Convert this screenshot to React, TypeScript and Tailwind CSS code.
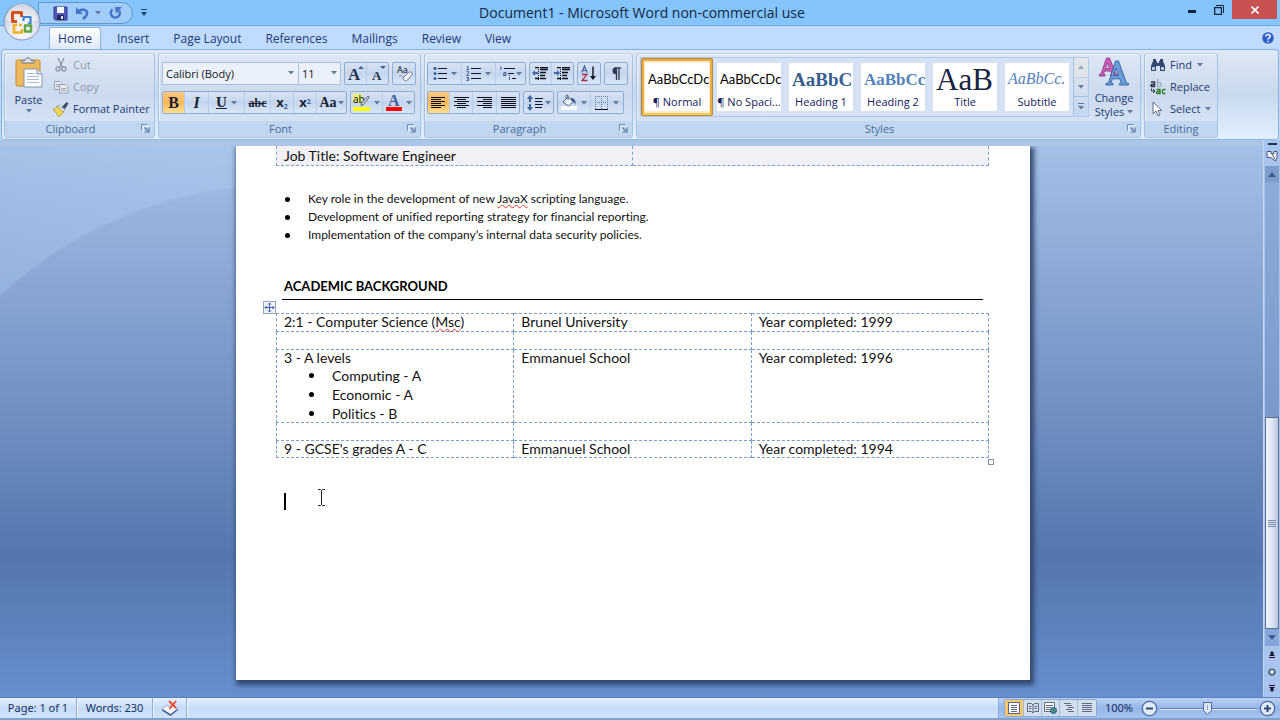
import React from "react";

type Kids = { children?: React.ReactNode };

const Caret = ({ className = "" }: { className?: string }) => (
  <svg className={`shrink-0 ${className}`} width="6" height="4" viewBox="0 0 6 4" aria-hidden="true">
    <path d="M0 0h6L3 3.5z" fill="#66799c" />
  </svg>
);

const Launcher = ({ label }: { label: string }) => (
  <button aria-label={`${label} options`} className="absolute right-1 top-[3px]">
    <svg width="9" height="9" viewBox="0 0 9 9" fill="none">
      <path d="M2 8V2h6" stroke="#fff" strokeOpacity=".8" />
      <path d="M.5 6.500V.500h6" stroke="#6f8bb5" />
      <path d="M3.500 3.500l3.500 3.500M8 3.500V8H3.500" stroke="#5b77a3" strokeWidth="1.200" />
    </svg>
  </button>
);

function Group({ label, width, launcher = true, children }: Kids & { label: string; width: string; launcher?: boolean }) {
  return (
    <section
      aria-label={label}
      className={`${width} flex shrink-0 flex-col overflow-hidden rounded-[3px] border border-[#a9c2e3] border-t-[#c3d3ea] bg-linear-to-b from-[#dde7f5] via-[#cbdaee] to-[#d9e7f9] shadow-[inset_1px_1px_0_#e9f1fb]`}
    >
      <div className="flex min-h-0 flex-1">{children}</div>
      <div className={`relative flex h-4 items-center justify-center bg-[#c1d7f0] text-[11px] leading-4 text-[#4a6a9c] ${launcher ? "pr-[18px]" : ""}`}>
        {label}
        {launcher && <Launcher label={label} />}
      </div>
    </section>
  );
}

const Box = ({ children }: Kids) => (
  <div className="flex h-[23px] divide-x divide-[#b9cbe6] overflow-hidden rounded-[2px] border border-[#94abd0] bg-linear-to-b from-[#d7e3f4] via-[#c5d6ed] to-[#d8e6f8]">
    {children}
  </div>
);

function Tool({ label, width, active = false, children }: Kids & { label: string; width: string; active?: boolean }) {
  return (
    <button
      aria-label={label}
      aria-pressed={active}
      className={`${width} flex items-center justify-center gap-1 leading-none text-[#1b2233] ${active ? "bg-linear-to-b from-[#f9c882] via-[#fbb95a] to-[#fde08e]" : ""}`}
    >
      {children}
    </button>
  );
}

const serif = "font-['Liberation_Serif',serif]";

const Lines = ({ widths, align }: { widths: number[]; align: "l" | "c" | "r" }) => (
  <svg width="15" height="12" viewBox="0 0 15 12" aria-hidden="true" shapeRendering="crispEdges">
    {widths.map((w, i) => {
      const x = align === "l" ? 0 : align === "r" ? 15 - w : (15 - w) / 2;
      return <rect key={i} x={Math.round(x)} y={i * 2} width={w} height="1" fill="#0a0f1c" />;
    })}
  </svg>
);

const Bullets = () => (
  <svg width="14" height="14" viewBox="0 0 14 14" aria-hidden="true">
    {[2, 7, 12].map((y) => (
      <g key={y}>
        <circle cx="2" cy={y - 0.5} r="1.6" fill="#44629f" />
        <rect x="5" y={y - 1} width="9" height="1" fill="#111827" />
      </g>
    ))}
  </svg>
);

const Numbers = () => (
  <svg width="15" height="15" viewBox="0 0 15 15" fill="none" aria-hidden="true">
    <path d="M1 .500h1v3M.500 3.500h2.500M.500 5.500h2v1.500L.500 9.500H3M.500 11.500h2v3h-2M1 13h1.500" stroke="#44629f" />
    <path d="M5 2.500h10M5 7.500h10M5 12.500h10" stroke="#111827" />
  </svg>
);

const Multi = () => (
  <svg width="17" height="15" viewBox="0 0 17 15" fill="none" aria-hidden="true">
    <path d="M1 1h1v3M4.500 6.500h2.500v3H4.500v-1.500H7M10.500 11v3M10.500 9v1" stroke="#44629f" />
    <path d="M5 2.500h11M9 7.500h6M13 12.500h4" stroke="#111827" />
  </svg>
);

const Indent = ({ out = false }: { out?: boolean }) => (
  <svg width="17" height="13" viewBox="0 0 17 13" fill="none" aria-hidden="true">
    <path d="M3 .5h4M8 .5h8M8 2.500h8M8 5.500h6M8 8.500h5M3 11.500h4M8 11.500h6" stroke="#0a0f1c" strokeWidth="1.600" />
    <path d="M6.500 0v13" stroke="#0a0f1c" strokeDasharray="1 1" />
    <path d={out ? "M0 6l3-3v2h3v2H3v2z" : "M6 6L3 3v2H0v2h3v2z"} fill="#4566a6" />
  </svg>
);

const Sort = () => (
  <svg width="16" height="17" viewBox="0 0 16 17" fill="none" aria-hidden="true">
    <path d="M1 7.500L3.500 1 6 7.500M2 5.500h3" stroke="#3f5f9e" strokeWidth="1.200" />
    <path d="M1 9.500h5L1 15.500h5.500" stroke="#a8324e" strokeWidth="1.300" />
    <path d="M12 1.500V12" stroke="#0a0f1c" strokeWidth="1.400" />
    <path d="M9 11h6l-3 4z" fill="#0a0f1c" />
  </svg>
);

const Spacing = () => (
  <svg width="16" height="16" viewBox="0 0 16 16" fill="none" aria-hidden="true">
    <path d="M3 0L0 4h2v3h2V4h2zM3 16l-3-4h2V9h2v3h2z" fill="#3f5f9e" />
    <path d="M8 3.500h8M8 6.500h7M8 9.500h8M8 12.500h7" stroke="#111827" />
  </svg>
);

const Bucket = () => (
  <svg width="16" height="17" viewBox="0 0 16 17" fill="none" aria-hidden="true">
    <rect y="12" width="16" height="4" fill="#f7faff" />
    <path d="M2 8l5-5 5.500 4.500-5 4.500z" fill="#eef3fb" stroke="#4b5d80" />
    <path d="M7 6V1.500c-1.500-1.500-2.500 0-2 3" stroke="#4b5d80" />
    <path d="M10 4c3 0 5 2 4.500 7-1-2-2-3.500-4-4z" fill="#39578f" />
  </svg>
);

const Borders = () => (
  <svg width="14" height="14" viewBox="0 0 14 14" fill="none" aria-hidden="true" shapeRendering="crispEdges">
    <path d="M0 .5h13M.5 2v11M6.500 2v11M12.500 2v11M0 6.500h13" stroke="#6a7ca0" strokeDasharray="1 1" />
    <path d="M0 13.500h13" stroke="#0a0f1c" />
  </svg>
);

const Highlighter = () => (
  <svg width="17" height="17" viewBox="0 0 17 17" fill="none" aria-hidden="true">
    <rect x="0" y="0" width="9" height="9" fill="#e9f36b" />
    <text x="0" y="9" fontSize="10" fill="#111827" fontFamily="Noto Sans, sans-serif">ab</text>
    <path d="M15 2l1.500 1-6 7.500-2.500 1 .5-2.500z" fill="#d9dfea" stroke="#49546b" strokeWidth=".9" />
    <rect y="13" width="17" height="4" fill="#ffff00" />
  </svg>
);

const Eraser = () => (
  <svg width="17" height="17" viewBox="0 0 17 17" fill="none" aria-hidden="true">
    <text x="1" y="8" fontSize="9" fill="#111827" fontFamily="Noto Sans, sans-serif">Aa</text>
    <path d="M7 13l5.500-5.500c1-1 3-.5 3.500.5s0 2-.5 2.500L11.500 15c-1.500 1.500-4 .5-4.500-2z" fill="#f2f5fa" stroke="#6a7385" />
    <path d="M3 12c1-2 3-1 4 0" stroke="#8a93a5" />
  </svg>
);

function FontGroup() {
  return (
    <Group label="Font" width="w-[263px]">
      <div className="flex flex-col gap-[6px] px-[3px] pt-[8px]">
        <div className="flex gap-[3px]">
          <div className="flex h-[23px] text-[11px] text-[#10131a]">
            <label className="relative flex">
              <span className="sr-only">Font name</span>
              <select className="w-[137px] appearance-none border border-[#abc0de] bg-[#eaf1fb] pl-[3px] leading-5 outline-none">
                <option>Calibri (Body)</option>
              </select>
              <Caret className="pointer-events-none absolute right-[5px] top-[9px]" />
            </label>
            <label className="relative -ml-px flex">
              <span className="sr-only">Font size</span>
              <select className="w-[43px] appearance-none border border-[#abc0de] bg-[#eaf1fb] pl-[3px] leading-5 outline-none">
                <option>11</option>
              </select>
              <Caret className="pointer-events-none absolute right-1 top-[9px]" />
            </label>
          </div>
          <Box>
            <Tool label="Grow font" width="w-[22px]">
              <svg width="18" height="18" viewBox="0 0 18 18"><text x="1" y="15" fontSize="17" fontWeight="bold" fill="#26334d" fontFamily="Liberation Serif">A</text><path d="M11 4l3-3 3 3z" fill="#3f5f9e" /></svg>
            </Tool>
            <Tool label="Shrink font" width="w-[21px]">
              <svg width="18" height="18" viewBox="0 0 18 18"><text x="3" y="15" fontSize="13" fontWeight="bold" fill="#26334d" fontFamily="Liberation Serif">A</text><path d="M11 1l3 3 3-3z" fill="#3f5f9e" /></svg>
            </Tool>
          </Box>
          <Box><Tool label="Clear formatting" width="w-[22px]"><Eraser /></Tool></Box>
        </div>
        <div className="flex gap-[3px]">
          <Box>
            <Tool label="Bold" width="w-[22px]" active><b className={`${serif} text-[16px] font-black`}>B</b></Tool>
            <Tool label="Italic" width="w-6"><i className={`${serif} text-[16px] font-bold`}>I</i></Tool>
            <Tool label="Underline" width="w-[36px]"><span className={`${serif} text-[15px] font-bold underline`}>U</span><Caret /></Tool>
            <Tool label="Strikethrough" width="w-[26px]"><span className={`${serif} text-[12px] font-bold line-through`}>abc</span></Tool>
            <Tool label="Subscript" width="w-[23px]"><span className="text-[13px] font-bold">x<sub className="text-[7px] text-[#3f5f9e]">2</sub></span></Tool>
            <Tool label="Superscript" width="w-[23px]"><span className="text-[13px] font-bold">x<sup className="text-[7px] text-[#3f5f9e]">2</sup></span></Tool>
            <Tool label="Change case" width="w-[29px]"><span className={`${serif} flex items-center gap-px text-[14px] font-bold`}>Aa<Caret /></span></Tool>
          </Box>
          <Box>
            <Tool label="Highlight" width="w-8"><Highlighter /><Caret /></Tool>
            <Tool label="Font color" width="w-[31px]">
              <svg width="16" height="17" viewBox="0 0 16 17"><text x="2" y="12" fontSize="16" fontWeight="bold" fill="#3f5f9e" fontFamily="Liberation Serif">A</text><rect y="13" width="16" height="4" fill="#ff0000" /></svg>
              <Caret />
            </Tool>
          </Box>
        </div>
      </div>
    </Group>
  );
}

function ParagraphGroup() {
  return (
    <Group label="Paragraph" width="w-[209px]">
      <div className="flex flex-col gap-[6px] px-[2px] pt-[8px]">
        <div className="flex gap-[3px]">
          <Box>
            <Tool label="Bullets" width="w-[34px]"><Bullets /><Caret /></Tool>
            <Tool label="Numbering" width="w-[34px]"><Numbers /><Caret /></Tool>
            <Tool label="Multilevel list" width="w-[29px]"><span className="flex items-center"><Multi /><Caret /></span></Tool>
          </Box>
          <Box>
            <Tool label="Decrease indent" width="w-[22px]"><Indent out /></Tool>
            <Tool label="Increase indent" width="w-[21px]"><Indent /></Tool>
          </Box>
          <Box><Tool label="Sort" width="w-[22px]"><Sort /></Tool></Box>
          <Box>
            <Tool label="Show marks" width="w-[22px]">
              <svg width="10" height="13" viewBox="0 0 10 13" fill="none"><path d="M5.500 13V.8M8 13V.8M10 .8H4" stroke="#2f394f" strokeWidth="1.300" /><path d="M5 .2a3.500 3.500 0 0 0 0 7z" fill="#2f394f" /></svg>
            </Tool>
          </Box>
        </div>
        <div className="flex gap-[3px]">
          <Box>
            <Tool label="Align left" width="w-[22px]" active><Lines align="l" widths={[14, 10, 14, 10, 14, 10]} /></Tool>
            <Tool label="Center" width="w-[23px]"><Lines align="c" widths={[15, 9, 15, 9, 15, 9]} /></Tool>
            <Tool label="Align right" width="w-6"><Lines align="r" widths={[15, 9, 15, 9, 15, 9]} /></Tool>
            <Tool label="Justify" width="w-[22px]"><Lines align="l" widths={[15, 15, 15, 15, 15, 15]} /></Tool>
          </Box>
          <Box><Tool label="Line spacing" width="w-[29px]"><span className="flex items-center gap-[2px]"><Spacing /><Caret /></span></Tool></Box>
          <Box>
            <Tool label="Shading" width="w-[33px]"><Bucket /><Caret /></Tool>
            <Tool label="Borders" width="w-[32px]"><Borders /><Caret /></Tool>
          </Box>
        </div>
      </div>
    </Group>
  );
}

const styleList = [
  { name: "¶ Normal", sample: "AaBbCcDc", look: "font-['Lato',sans-serif] text-[13px] text-black" },
  { name: "¶ No Spaci...", sample: "AaBbCcDc", look: "font-['Lato',sans-serif] text-[13px] text-black" },
  { name: "Heading 1", sample: "AaBbC", look: "font-['Liberation_Serif',serif] text-[19px] font-bold text-[#365f91]" },
  { name: "Heading 2", sample: "AaBbCc", look: "font-['Liberation_Serif',serif] text-[17px] font-bold text-[#5382bb]" },
  { name: "Title", sample: "AaB", look: "font-['Liberation_Serif',serif] text-[31px] text-[#17233f]" },
  { name: "Subtitle", sample: "AaBbCc.", look: "font-['Liberation_Serif',serif] text-[16px] italic text-[#5382bb]" },
];

function StylesGroup() {
  return (
    <Group label="Styles" width="w-[505px]">
      <div className="flex pl-[3px] pt-[3px]">
        <div className="flex h-[60px] border border-[#b5c8e4] bg-[#d5e1f4]">
          {styleList.map((s, i) => (
            <button
              key={s.name}
              className={`flex h-[58px] w-[72px] items-center justify-center rounded-[2px] ${i === 0 ? "border-[3px] border-[#f0ab3e] border-b-[#ffcf4b] bg-[#fdebc8] outline outline-[#b08a4c] -outline-offset-1" : ""}`}
            >
              <span className="flex h-12 w-16 flex-col overflow-hidden bg-white">
                <span className={`flex h-8 w-full items-center overflow-hidden whitespace-nowrap pl-[3px] leading-none ${s.look}`}>{s.sample}</span>
                <span className="whitespace-nowrap text-center text-[11px] leading-[14px] text-[#15205c]">{s.name}</span>
              </span>
            </button>
          ))}
          <div className="flex w-[15px] flex-col divide-y divide-[#a9bfde] border-l border-[#a9bfde] bg-linear-to-b from-[#e3e7ec] to-[#c4d7f1]">
            <button aria-label="Scroll up" className="flex flex-1 items-center justify-center bg-[#e2e6ea] opacity-60"><Caret className="rotate-180" /></button>
            <button aria-label="Scroll down" className="flex flex-1 items-center justify-center"><Caret /></button>
            <button aria-label="More styles" className="flex flex-1 flex-col items-center justify-center gap-[2px]"><span className="h-px w-[6px] bg-[#66799c]" /><Caret /></button>
          </div>
        </div>
        <button className="flex w-[50px] flex-col items-center text-[11px] leading-[14px] text-[#1e3a72]">
          <svg width="30" height="30" viewBox="0 0 30 30" className="mb-1 shrink-0" aria-hidden="true" strokeLinejoin="round">
            <path d="M0 19h6v-1.500l-1.500-.5 1-3h6l1.500 3-1.500.5V19h7v-1.500L17 17 10.500 1H7.500L2 17l-2 .5zM6.500 11.500L8.500 6l2 5.500z" fill="#c95fb5" stroke="#8d2f86" strokeWidth=".8" />
            <path d="M7 28h7v-1.500l-2-.7 1.500-4h7l2 4-2 .7V28h9v-1.500l-2-.5L19.500 4h-3L9.500 26l-2.500.5zM14.500 18.500L17 11l2.500 7.500z" fill="#6a9edb" stroke="#2c5698" strokeWidth=".8" />
          </svg>
          <span>Change</span>
          <span className="flex items-center gap-[3px]">Styles<Caret /></span>
        </button>
      </div>
    </Group>
  );
}

const rowBtn = "flex h-[22px] items-center gap-1 whitespace-nowrap text-[11px]";

function ClipboardGroup() {
  return (
    <Group label="Clipboard" width="w-[151px]">
      <button className="ml-[2px] flex w-[43px] shrink-0 flex-col items-center pt-[3px] text-[11px] leading-[14px] text-[#1e3a72]">
        <svg width="28" height="32" viewBox="0 0 28 32" aria-hidden="true" className="mb-1">
          <rect x="1" y="3" width="24" height="26" rx="1.500" fill="#eeb95a" stroke="#c08a35" />
          <path d="M7 6V3.500h3C10 0 16 0 16 3.500h3V6z" fill="#dfe3e8" stroke="#6b7482" />
          <path d="M9 12h13l5 5v13H9z" fill="#fbfdff" stroke="#8295b5" />
          <path d="M22 12v5h5" fill="#dbe5f3" stroke="#8295b5" />
          <path d="M12 16.500h8M12 19.500h12M12 22.500h12M12 25.500h12" stroke="#a9bbd7" />
        </svg>
        <span>Paste</span>
        <Caret className="mt-[2px]" />
      </button>
      <div className="flex flex-col pl-[3px]">
        <button disabled className={`${rowBtn} text-[#8e98a9]`}>
          <svg width="16" height="16" viewBox="0 0 16 16" fill="none" stroke="#8e98a9" strokeWidth="1.400" aria-hidden="true">
            <path d="M5 1l4.500 9.500M11 1L6.500 10.500" />
            <circle cx="5" cy="12" r="2" /><circle cx="11" cy="12" r="2" />
          </svg>
          Cut
        </button>
        <button disabled className={`${rowBtn} text-[#8e98a9]`}>
          <svg width="16" height="16" viewBox="0 0 16 16" fill="#e6ebf2" stroke="#98a3b5" aria-hidden="true">
            <path d="M1.500 2.500h6l2 2v6h-8z" /><path d="M3 5.500h4M3 7.500h3" />
            <path d="M6.500 5.500h6l2.500 2.500v6H6.500z" /><path d="M8 9.500h5M8 11.500h5" />
          </svg>
          Copy
        </button>
        <button className={`${rowBtn} text-[#1e3a72]`}>
          <svg width="16" height="16" viewBox="0 0 16 16" aria-hidden="true">
            <path d="M9 6l4.500-5 2 1.500-3.500 5.500z" fill="#3c4c68" />
            <path d="M5 4l7 5-2 2-6-5z" fill="#e9edf3" stroke="#77829a" strokeWidth=".7" />
            <path d="M4 5.500l6.500 5.500C9 13.500 7 15 5.500 15.500 4 13 2 10 0 8.500 2 8 3 7 4 5.500z" fill="#f1d75a" stroke="#a88b2b" strokeWidth=".8" />
          </svg>
          Format Painter
        </button>
      </div>
    </Group>
  );
}

function EditingGroup() {
  return (
    <Group label="Editing" width="w-[74px]" launcher={false}>
      <div className="flex flex-col pl-[5px] text-[#1e3a72]">
        <button className={rowBtn}>
          <svg width="16" height="14" viewBox="0 0 16 14" fill="#33486f" aria-hidden="true">
            <path d="M3 1h3v2h1v2h2V3h1V1h3v2l2 5v5h-5V8H6v5H1V8l2-5z" />
            <path d="M2 9h3v3H2zM11 9h3v3h-3z" fill="#b9cae6" />
          </svg>
          Find<Caret className="ml-px" />
        </button>
        <button className={rowBtn}>
          <svg width="16" height="16" viewBox="0 0 16 16" fill="none" aria-hidden="true">
            <path d="M1 3h3.500v4.500H2c-1.500 0-1.500-2 0-2h2.500" stroke="#2b3140" strokeWidth="1.400" />
            <path d="M7.500 0v7.500h2c2 0 2-4 0-4h-2" stroke="#a3acbd" strokeWidth="1.400" />
            <path d="M6.500 10.500H10v4H7.500c-1.500 0-1.500-2 0-2H10M15.500 10.500h-2c-1.500 0-1.500 4 0 4h2" stroke="#2f7d2b" strokeWidth="1.400" />
            <path d="M1.500 9.500v2.500h3M3 10l2 2-2 2" stroke="#26334d" />
          </svg>
          Replace
        </button>
        <button className={rowBtn}>
          <svg width="16" height="16" viewBox="0 0 16 16" aria-hidden="true">
            <path d="M3 1v12l3-3 2 5 2-1-2-4.500h4z" fill="#fff" stroke="#5d6c8c" />
          </svg>
          Select<Caret className="ml-px" />
        </button>
      </div>
    </Group>
  );
}

const Spell = ({ children }: Kids) => (
  <span className="underline decoration-[#e04040] decoration-wavy decoration-1 underline-offset-1">{children}</span>
);

const cell = "border border-dashed border-[#7d9fcf] p-0 pl-[7px] align-top";

function Page() {
  return (
    <article className="relative flex w-[794px] shrink-0 flex-col bg-white pl-10 pr-[41px] font-['Lato',sans-serif] text-[14px] text-[#111] shadow-[2px_3px_5px_2px_#31486f] [font-variant-ligatures:none]">
      <table className="h-5 w-full table-fixed border-collapse bg-[#f1f0f4]">
        <tbody>
          <tr>
            <td className={`${cell} border-t-0 leading-[19px]`}>Job Title: Software Engineer</td>
            <td className={`${cell} border-t-0`} />
          </tr>
        </tbody>
      </table>
      <ul className="mt-6 pl-2 text-[12px] leading-[18px]">
        {[
          <>Key role in the development of new <Spell>JavaX</Spell> scripting language.</>,
          <>Development of unified reporting strategy for financial reporting.</>,
          <>Implementation of the company’s internal data security policies.</>,
        ].map((line, i) => (
          <li key={i} className="flex items-center gap-[18px]">
            <span className="ml-px size-[5px] rounded-full bg-black" />
            <span>{line}</span>
          </li>
        ))}
      </ul>
      <h2 className="mx-[6px] mt-[33px] border-b border-black pb-1 pl-[2px] text-[13px] font-bold leading-[18px] text-black">ACADEMIC BACKGROUND</h2>
      <div className="relative mt-[13px]">
        <button aria-label="Move table" className="absolute -left-[13px] -top-3">
          <svg width="13" height="13" viewBox="0 0 13 13" fill="none">
            <rect x=".5" y=".5" width="12" height="12" fill="#edf1fa" stroke="#9aa4b8" />
            <path d="M6.500 2v9M2 6.500h9M5 3.500L6.500 2 8 3.500M5 9.500L6.500 11 8 9.500M3.500 5L2 6.500 3.500 8M9.500 5L11 6.500 9.500 8" stroke="#4360a8" />
          </svg>
        </button>
        <table className="w-full table-fixed border-collapse leading-4">
          <tbody>
            <tr className="h-[18px]">
              <td className={cell}>2:1 - Computer Science (<Spell>Msc</Spell>)</td>
              <td className={cell}>Brunel University</td>
              <td className={cell}>Year completed: 1999</td>
            </tr>
            <tr className="h-[18px]"><td className={cell} /><td className={cell} /><td className={cell} /></tr>
            <tr className="h-[73px]">
              <td className={cell}>
                3 - A levels
                <ul className="-mb-px pl-[25px] leading-[19px]">
                  {["Computing - A", "Economic - A", "Politics - B"].map((s) => (
                    <li key={s} className="flex items-center gap-[18px]"><span className="size-[5px] rounded-full bg-black" />{s}</li>
                  ))}
                </ul>
              </td>
              <td className={cell}>Emmanuel School</td>
              <td className={cell}>Year completed: 1996</td>
            </tr>
            <tr className="h-[18px]"><td className={cell} /><td className={cell} /><td className={cell} /></tr>
            <tr className="h-[17px]">
              <td className={cell}>9 - GCSE's grades A - C</td>
              <td className={cell}>Emmanuel School</td>
              <td className={cell}>Year completed: 1994</td>
            </tr>
          </tbody>
        </table>
        <span className="absolute -bottom-[7px] -right-[5px] size-[6px] border border-[#8a8f9a] bg-white" />
      </div>
      <div className="mt-[35px] flex h-[187px] items-start pl-2">
        <span className="h-[17px] w-[2px] bg-black" />
        <svg className="-mt-1 ml-8" width="7" height="17" viewBox="0 0 7 17" fill="none" aria-hidden="true">
          <path d="M0 .5h2.500l1 1 1-1H7M0 16.500h2.500l1-1 1 1H7M3.500 1v15" stroke="#222" />
        </svg>
      </div>
    </article>
  );
}

function ScrollColumn() {
  return (
    <div className="flex w-[17px] shrink-0 flex-col items-center border-l border-[#c4d9f8] bg-[#a9c4ef] pt-[3px]">
      <span className="h-[2px] w-[9px] bg-[#26334d]" />
      <button aria-label="View ruler" className="mt-1">
        <svg width="12" height="13" viewBox="0 0 12 13" fill="#f2f5fb" stroke="#45567b"><path d="M1 2.500h4v2h3v-2h3v6l-1.500 3.500L6 9.500 4.500 8.500H1z" /><path d="M6 5l3 5" /></svg>
      </button>
      <button aria-label="Scroll up" className="mt-1 flex h-4 w-[14px] items-center justify-center bg-[#7f9dcb]">
        <svg width="8" height="5" viewBox="0 0 8 5"><path d="M0 5h8L4 0z" fill="#3d5a8e" /></svg>
      </button>
      <div className="flex w-[14px] flex-1 flex-col justify-end bg-linear-to-b from-[#8dabd8] via-[#7c9bcb] to-[#7596c8]">
        <div className="flex h-[212px] flex-col items-center justify-center gap-px border border-[#5d7196] bg-linear-to-r from-[#edf2fa] via-[#dfe7f2] to-[#b9c8dd]">
          {[0, 1, 2, 3].map((i) => <span key={i} className="h-px w-2 bg-[#7d8ca8]" />)}
        </div>
      </div>
      <button aria-label="Scroll down" className="flex h-[17px] w-[14px] items-center justify-center bg-[#88a7d9]">
        <svg width="8" height="5" viewBox="0 0 8 5"><path d="M0 0h8L4 5z" fill="#3d5a8e" /></svg>
      </button>
      <button aria-label="Previous page" className="flex h-[17px] items-center">
        <svg width="6" height="7" viewBox="0 0 6 7" fill="#0b1226"><path d="M3 0l2.500 2.500h-5zM3 2l3 3H0zM0 6h6v1H0z" /></svg>
      </button>
      <button aria-label="Select browse object" className="flex h-[17px] items-center">
        <svg width="8" height="8" viewBox="0 0 8 8"><circle cx="4" cy="4" r="3" fill="#cfd8e8" stroke="#26334d" strokeWidth="1.200" /></svg>
      </button>
      <button aria-label="Next page" className="flex h-[17px] items-center">
        <svg width="6" height="7" viewBox="0 0 6 7" fill="#0b1226"><path d="M3 7L.5 4.500h5zM3 5L0 2h6zM0 0h6v1H0z" /></svg>
      </button>
    </div>
  );
}

const PageIcon = ({ d, frame = true }: { d: string; frame?: boolean }) => (
  <svg width="12" height="12" viewBox="0 0 12 12" fill="none" aria-hidden="true">
    {frame && <rect x=".5" y=".5" width="11" height="11" fill="#fbfcfe" stroke="#56647f" />}
    <path d={d} stroke="#5d6a82" />
  </svg>
);

function StatusBar() {
  const sep = "border-r border-[#8fadd9] shadow-[1px_0_0_#f3f8ff]";
  return (
    <footer className="flex h-[23px] shrink-0 items-stretch border-b-2 border-t border-b-[#7fa3ce] border-t-[#5d82b8] bg-linear-to-b from-[#e6f0fe] via-[#c7dcf9] to-[#d2e4fc] font-['Noto_Sans',sans-serif] text-[11px] text-[#16305f]">
      <button className={`${sep} w-[77px]`}>Page: 1 of 1</button>
      <button className={`${sep} w-[76px]`}>Words: 230</button>
      <button aria-label="Proofing errors" className={`${sep} flex w-[34px] items-center justify-center`}>
        <svg width="16" height="16" viewBox="0 0 16 16" aria-hidden="true">
          <path d="M0 9l5-4 3 2 3-2 5 4-7 6z" fill="#f4f7fc" stroke="#8390b5" strokeWidth=".8" />
          <path d="M0 10l8.500 5 7-5.500" fill="none" stroke="#4d5f9d" strokeWidth="1.500" />
          <path d="M7 1l7 7M14 1L7.500 9" stroke="#ea4a34" strokeWidth="1.800" />
        </svg>
      </button>
      <div className={`${sep} flex-1`} />
      <div className="flex items-center bg-linear-to-b from-[#b9d1f5] via-[#95b7e8] to-[#a5c4f1] pl-[5px] pr-1">
        <div className="flex h-[18px] divide-x divide-[#a4bad9] overflow-hidden rounded-[2px] border border-[#8da8d0] bg-[#d3dfef]">
          <button aria-label="Print layout" className="flex w-[19px] items-center justify-center bg-[#fbc871]"><PageIcon d="M3 3.500h6M3 5.500h6M3 7.500h6M3 9.500h6" /></button>
          <button aria-label="Full screen reading" className="flex w-[18px] items-center justify-center"><PageIcon frame={false} d="M6 2v9M.5 1.500h4L6 3l1.500-1.500h4v8h-4L6 11 4.500 9.500h-4zM2 4.500h2.500M2 6.500h2.500M7.500 4.500H10M7.500 6.500H10" /></button>
          <button aria-label="Web layout" className="flex w-[18px] items-center justify-center">
            <svg width="13" height="12" viewBox="0 0 13 12"><path d="M.5.500h10v9H.5zM2 3.500h7M2 5.500h5M2 7.500h4" fill="#fbfcfe" stroke="#5d6a82" /><circle cx="9.500" cy="8.500" r="3" fill="#4c8a7d" stroke="#2c5698" /></svg>
          </button>
          <button aria-label="Outline" className="flex w-[18px] items-center justify-center"><PageIcon frame={false} d="M1 1.500h7M3 3.500h6M5 5.500h6M3 7.500h6M5 9.500h6" /></button>
          <button aria-label="Draft" className="flex w-[18px] items-center justify-center"><PageIcon frame={false} d="M1 1.500h10M1 3.500h10M1 5.500h10M1 7.500h10M1 9.500h10" /></button>
        </div>
        <button className="w-[44px] text-center">100%</button>
        <button aria-label="Zoom out">
          <svg width="17" height="17" viewBox="0 0 17 17"><circle cx="8.500" cy="8.500" r="7.200" fill="#dfeafa" stroke="#4f6c9d" strokeWidth="1.300" /><path d="M5 8.500h7" stroke="#33486f" strokeWidth="2" /></svg>
        </button>
        <div className="relative h-4 w-[101px]">
          <svg width="101" height="16" viewBox="0 0 101 16" aria-hidden="true">
            <path d="M2 8.500h97" stroke="#5d7fb5" /><path d="M2 9.500h97" stroke="#e3eefd" />
            <path d="M45.500 2.500h8v8l-4 4-4-4z" fill="#dde9f9" stroke="#4f6c9d" /><path d="M49.500 5v5" stroke="#8fa6c9" />
          </svg>
          <input type="range" aria-label="Zoom" defaultValue={50} className="absolute inset-0 w-full opacity-0" />
        </div>
        <button aria-label="Zoom in">
          <svg width="17" height="17" viewBox="0 0 17 17"><circle cx="8.500" cy="8.500" r="7.200" fill="#dfeafa" stroke="#4f6c9d" strokeWidth="1.300" /><path d="M5 8.500h7M8.500 5v7" stroke="#33486f" strokeWidth="2" /></svg>
        </button>
      </div>
    </footer>
  );
}

function TitleBar() {
  return (
    <header className="relative flex h-[26px] shrink-0 items-start border-b border-[#6ba5dc] bg-[#84c5fe]">
      <div className="ml-[38px] mt-[2px] flex h-[22px] w-[95px] shrink-0 items-center rounded-r-full border border-[#6494c8] bg-[#a0cdf9] pl-[14px]">
        <button aria-label="Save">
          <svg width="15" height="15" viewBox="0 0 15 15"><path d="M1 1h13v13H2.500L1 12.500z" fill="#5158b8" stroke="#30368a" /><rect x="4" y="1" width="7" height="6" fill="#f3f6fc" /><rect x="4" y="9" width="7" height="5" fill="#23295f" /><rect x="8" y="10" width="2" height="3" fill="#dfe5f2" /></svg>
        </button>
        <button aria-label="Undo" className="ml-2">
          <svg width="13" height="13" viewBox="0 0 13 13" fill="none"><path d="M2 5C5 1.500 11 2 11 6c0 2.500-1.500 4-4 6" stroke="#4873c8" strokeWidth="2.600" /><path d="M0 0v7h7z" fill="#4873c8" /></svg>
        </button>
        <Caret className="ml-[6px]" />
        <button aria-label="Repeat" className="ml-[8px]">
          <svg width="13" height="13" viewBox="0 0 13 13" fill="none"><path d="M3.500 2.500a4.500 4.500 0 1 0 6.500 1" stroke="#4873c8" strokeWidth="2.600" /><path d="M6 0h7L7 6.500z" fill="#4873c8" /></svg>
        </button>
      </div>
      <button aria-label="Customize toolbar" className="ml-2 mt-[9px] flex flex-col items-center gap-[2px]">
        <span className="h-px w-[6px] bg-[#24406f]" />
        <svg width="6" height="4" viewBox="0 0 6 4"><path d="M0 0h6L3 4z" fill="#24406f" /></svg>
      </button>
      <h1 className="min-w-0 flex-1 pr-[42px] pt-px text-center text-[14px] leading-6 text-[#15253d]">Document1 - Microsoft Word non-commercial use</h1>
      <div className="flex h-[19px] items-center pr-[3px]">
        <button aria-label="Minimize" className="flex h-full w-[26px] items-center justify-center pt-1"><span className="h-[3px] w-2 bg-[#14253d]" /></button>
        <button aria-label="Restore" className="flex h-full w-[27px] items-center justify-center">
          <svg width="10" height="10" viewBox="0 0 10 10" fill="none" stroke="#14253d"><path d="M2 .5h7.500V8" /><rect x=".6" y="2.600" width="6.800" height="6.800" strokeWidth="1.300" /></svg>
        </button>
        <button aria-label="Close" className="flex h-full w-[45px] items-center justify-center bg-[#c75050]">
          <svg width="8" height="8" viewBox="0 0 8 8"><path d="M.5.500l7 7M7.500.500l-7 7" stroke="#fff" strokeWidth="1.600" /></svg>
        </button>
      </div>
    </header>
  );
}

function OfficeButton() {
  return (
    <button aria-label="Office menu" className="absolute left-[3px] top-[3px] z-10">
      <svg width="38" height="38" viewBox="0 0 38 38" fill="none">
        <defs>
          <radialGradient id="orb" cx="50%" cy="80%" r="75%">
            <stop offset="0" stopColor="#fdfdfe" /><stop offset=".6" stopColor="#dbe1ec" /><stop offset="1" stopColor="#a7b3c9" />
          </radialGradient>
        </defs>
        <circle cx="19" cy="19" r="18" fill="url(#orb)" stroke="#8496b5" />
        <path d="M3 17a16 16 0 0 1 32 0c-8 3-24 3-32 0z" fill="#fff" opacity=".5" />
        <path d="M14 18.500H9.500V9.500h9V14" stroke="#d9511f" strokeWidth="3" strokeLinejoin="round" />
        <path d="M20.500 14h7v6.500H25M20.500 13v5" stroke="#3f83cf" strokeWidth="2.200" strokeLinejoin="round" />
        <path d="M14 22h-3v7.500h8V26M16 22h3" stroke="#f2b322" strokeWidth="2.600" strokeLinejoin="round" />
        <path d="M22 22.500h6v6h-6z" stroke="#63a644" strokeWidth="2.400" strokeLinejoin="round" />
      </svg>
    </button>
  );
}

export default function App() {
  return (
    <div className="relative flex h-screen flex-col overflow-hidden bg-[#bfdbff] font-['Open_Sans',sans-serif]">
      <TitleBar />
      <OfficeButton />
      <nav className="flex h-[23px] shrink-0 items-stretch pl-[49px] pr-[5px] text-[12px] text-[#1e3a72]">
        <button className="mt-px w-[52px] rounded-t-[3px] border border-b-0 border-[#8fb3e3] bg-linear-to-b from-white to-[#dfe9f6] pt-px">Home</button>
        <div className="ml-1 flex">
          {["Insert", "Page Layout", "References", "Mailings", "Review", "View"].map((t) => (
            <button key={t} className="px-3 pt-[2px]">{t}</button>
          ))}
        </div>
        <button aria-label="Help" className="ml-auto">
          <svg width="14" height="14" viewBox="0 0 14 14"><circle cx="7" cy="7" r="6.300" fill="#2c5fc9" stroke="#e3edfb" /><path d="M4.800 5.500C5 3 9.300 3 9.200 5.400c0 1.500-2.200 1.500-2.200 3M7 9.700v1.600" fill="none" stroke="#fff" strokeWidth="1.500" /></svg>
        </button>
      </nav>
      <div className="mx-px flex h-[91px] shrink-0 gap-[3px] rounded-[4px] border border-[#86b0e0] border-b-[#8fb9e2] bg-linear-to-b from-[#dfe8f5] via-[#c8d9ee] to-[#e2f0ff] px-[2px] pb-px pt-[3px]">
        <ClipboardGroup />
        <FontGroup />
        <ParagraphGroup />
        <StylesGroup />
        <EditingGroup />
      </div>
      <main className="flex min-h-0 flex-1">
        <div className="flex min-w-0 flex-1 flex-col overflow-hidden bg-linear-to-b from-[#a6c0e7] via-[#5577ae] via-75% to-[#658fcf]">
          <div className="h-[6px] shrink-0 bg-[#adc5e8]" />
          <div className="flex min-h-0 flex-1 items-start justify-center overflow-hidden bg-[radial-gradient(circle_at_280px_450px,transparent_409px,#b8dbff40_412px,transparent_640px)] bg-size-[280px_100%] bg-no-repeat pl-[3px]"><Page /></div>
        </div>
        <ScrollColumn />
      </main>
      <StatusBar />
    </div>
  );
}
